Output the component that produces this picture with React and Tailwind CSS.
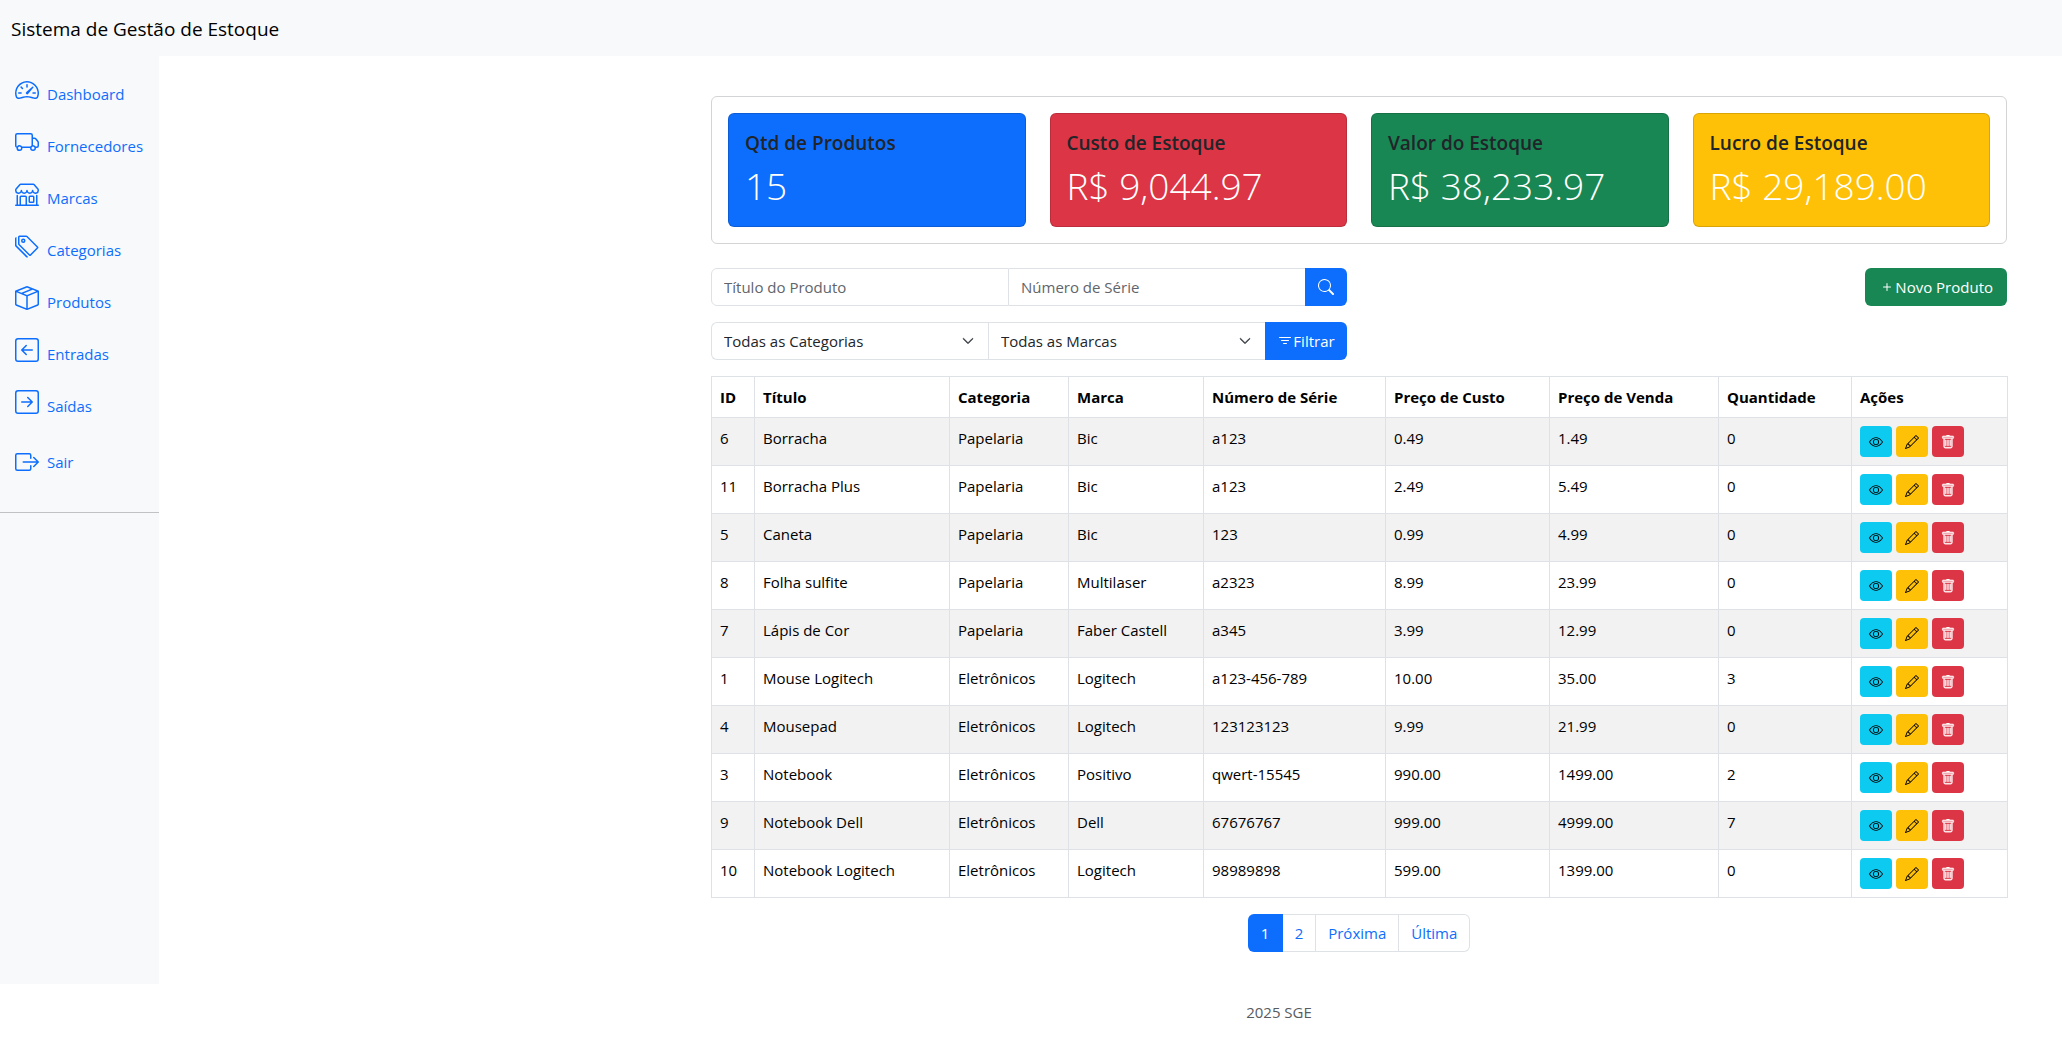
import {
  BsSpeedometer2, BsTruck, BsShop, BsTags, BsBoxSeam, BsArrowLeftSquare, BsArrowRightSquare,
  BsBoxArrowRight, BsSearch, BsFilter, BsPlus, BsEye, BsPencil, BsTrash, BsChevronDown,
} from "react-icons/bs";

const links = [
  ["Dashboard", BsSpeedometer2],
  ["Fornecedores", BsTruck],
  ["Marcas", BsShop],
  ["Categorias", BsTags],
  ["Produtos", BsBoxSeam],
  ["Entradas", BsArrowLeftSquare],
  ["Saídas", BsArrowRightSquare],
];

const metrics = [
  ["Qtd de Produtos", "15", "bg-[#0d6efd]"],
  ["Custo de Estoque", "R$ 9,044.97", "bg-[#dc3545]"],
  ["Valor do Estoque", "R$ 38,233.97", "bg-[#198754]"],
  ["Lucro de Estoque", "R$ 29,189.00", "bg-[#ffc107]"],
];

const columns = [
  ["ID", "w-[43px]"],
  ["Título", "w-[195px]"],
  ["Categoria", "w-[119px]"],
  ["Marca", "w-[135px]"],
  ["Número de Série", "w-[182px]"],
  ["Preço de Custo", "w-[164px]"],
  ["Preço de Venda", "w-[169px]"],
  ["Quantidade", "w-[133px]"],
  ["Ações", "w-[156px]"],
];

const products = [
  ["6", "Borracha", "Papelaria", "Bic", "a123", "0.49", "1.49", "0"],
  ["11", "Borracha Plus", "Papelaria", "Bic", "a123", "2.49", "5.49", "0"],
  ["5", "Caneta", "Papelaria", "Bic", "123", "0.99", "4.99", "0"],
  ["8", "Folha sulfite", "Papelaria", "Multilaser", "a2323", "8.99", "23.99", "0"],
  ["7", "Lápis de Cor", "Papelaria", "Faber Castell", "a345", "3.99", "12.99", "0"],
  ["1", "Mouse Logitech", "Eletrônicos", "Logitech", "a123-456-789", "10.00", "35.00", "3"],
  ["4", "Mousepad", "Eletrônicos", "Logitech", "123123123", "9.99", "21.99", "0"],
  ["3", "Notebook", "Eletrônicos", "Positivo", "qwert-15545", "990.00", "1499.00", "2"],
  ["9", "Notebook Dell", "Eletrônicos", "Dell", "67676767", "999.00", "4999.00", "7"],
  ["10", "Notebook Logitech", "Eletrônicos", "Logitech", "98989898", "599.00", "1399.00", "0"],
];

function SideLink({ label, icon: Icon, level }) {
  return (
    <a href="#" className="flex h-[52px] items-center gap-2 pr-4 pl-[15px] text-[#0d6efd]">
      <Icon className="size-6 shrink-0" />
      <span className={level ? "" : "mt-2"}>{label}</span>
    </a>
  );
}

function Sidebar() {
  return (
    <nav className="w-[159px] shrink-0 bg-[#f8f9fa] pt-2">
      {links.map(([label, icon]) => (
        <SideLink key={label} label={label} icon={icon} />
      ))}
      <div className="mt-2 border-b border-[#c0c2c4] pb-6">
        <SideLink label="Sair" icon={BsBoxArrowRight} level />
      </div>
    </nav>
  );
}

function FilterSelect({ label, className }) {
  return (
    <div className={`relative min-w-0 flex-1 border-y border-l border-[#dee2e6] ${className}`}>
      <select aria-label={label} className="h-9 w-full appearance-none bg-transparent pr-9 pl-3 text-[#212529]">
        <option>{label}</option>
      </select>
      <BsChevronDown className="pointer-events-none absolute top-3 right-3.5 size-3 stroke-1 text-[#343a40]" />
    </div>
  );
}

function Filters() {
  return (
    <div className="mt-6 grid grid-cols-2 gap-x-6 gap-y-4">
      <form className="flex h-[38px]">
        <input
          aria-label="Título do Produto"
          placeholder="Título do Produto"
          className="min-w-0 flex-1 rounded-l-md border border-[#dee2e6] px-3 placeholder:text-[#5f656b]"
        />
        <input
          aria-label="Número de Série"
          placeholder="Número de Série"
          className="min-w-0 flex-1 border-y border-[#dee2e6] px-3 placeholder:text-[#5f656b]"
        />
        <button type="button" aria-label="Buscar" className="flex w-[42px] items-center justify-center rounded-r-md bg-[#0d6efd] text-white">
          <BsSearch className="size-4" />
        </button>
      </form>
      <div className="flex justify-end">
        <a href="#" className="flex h-[38px] items-center rounded-md bg-[#198754] pr-3.5 pl-3.5 text-white">
          <BsPlus className="size-4" />
          Novo Produto
        </a>
      </div>
      <form className="flex h-[38px]">
        <FilterSelect label="Todas as Categorias" className="rounded-l-md" />
        <FilterSelect label="Todas as Marcas" className="" />
        <button type="button" className="flex w-[82px] items-center justify-center rounded-r-md bg-[#0d6efd] text-white">
          <BsFilter className="size-4" />
          Filtrar
        </button>
      </form>
    </div>
  );
}

function ProductTable() {
  return (
    <table className="mt-4 w-full table-fixed border-collapse text-left text-black">
      <thead>
        <tr className="h-[41px]">
          {columns.map(([name, width]) => (
            <th key={name} className={`border border-[#dee2e6] px-2 py-2 font-bold whitespace-nowrap ${width}`}>{name}</th>
          ))}
        </tr>
      </thead>
      <tbody>
        {products.map((row) => (
          <tr key={row[0]} className="h-12 odd:bg-[#f2f2f2]">
            {row.map((value, i) => (
              <td key={i} className="border border-[#dee2e6] px-2 pt-2 align-top">{value}</td>
            ))}
            <td className="border border-[#dee2e6] px-2 pt-2 align-top">
              <div className="flex gap-1">
                <a href="#" aria-label="Ver" className="flex h-[31px] w-8 items-center justify-center rounded bg-[#0dcaf0]">
                  <BsEye className="size-3.5" />
                </a>
                <a href="#" aria-label="Editar" className="flex h-[31px] w-8 items-center justify-center rounded bg-[#ffc107]">
                  <BsPencil className="size-3.5" />
                </a>
                <a href="#" aria-label="Excluir" className="flex h-[31px] w-8 items-center justify-center rounded bg-[#dc3545] text-white">
                  <BsTrash className="size-3.5 [stroke-width:0.5]" />
                </a>
              </div>
            </td>
          </tr>
        ))}
      </tbody>
    </table>
  );
}

function Pagination() {
  const item = "flex items-center border-y border-r border-[#dee2e6] px-3 text-[#0d6efd]";
  return (
    <nav aria-label="Paginação" className="mt-4 flex h-[38px] justify-center">
      <a href="#" aria-current="page" className="flex w-[35px] items-center justify-center rounded-l-md bg-[#0d6efd] text-white">1</a>
      <a href="#" className={item}>2</a>
      <a href="#" className={item}>Próxima</a>
      <a href="#" className={`${item} rounded-r-md`}>Última</a>
    </nav>
  );
}

export default function App() {
  return (
    <div className="bg-white font-['Open_Sans','Noto_Sans',sans-serif] text-[15px] leading-6 text-[#212529]">
      <header className="flex h-14 items-center bg-[#f8f9fa] px-[11px] pt-0.5">
        <a href="#" className="text-[19px] text-black">Sistema de Gestão de Estoque</a>
      </header>
      <div className="flex">
        <Sidebar />
        <main className="flex-1 pt-10 pr-[55px] pb-8">
          <div className="ml-auto max-w-[1296px]">
            <section className="grid grid-cols-4 gap-6 rounded-md border border-[#d3d4d5] p-4">
              {metrics.map(([title, value, color]) => (
                <div key={title} className={`rounded-md border border-black/15 p-4 ${color}`}>
                  <h5 className="mb-1.5 text-[19px] leading-[26px] font-semibold">{title}</h5>
                  <p className="text-[37px] leading-[48px] font-light text-white">{value}</p>
                </div>
              ))}
            </section>
            <Filters />
            <ProductTable />
            <Pagination />
          </div>
        </main>
      </div>
      <footer className="pt-4 pb-6 pl-[496px] text-center text-[#585b5f]">2025 SGE</footer>
    </div>
  );
}
